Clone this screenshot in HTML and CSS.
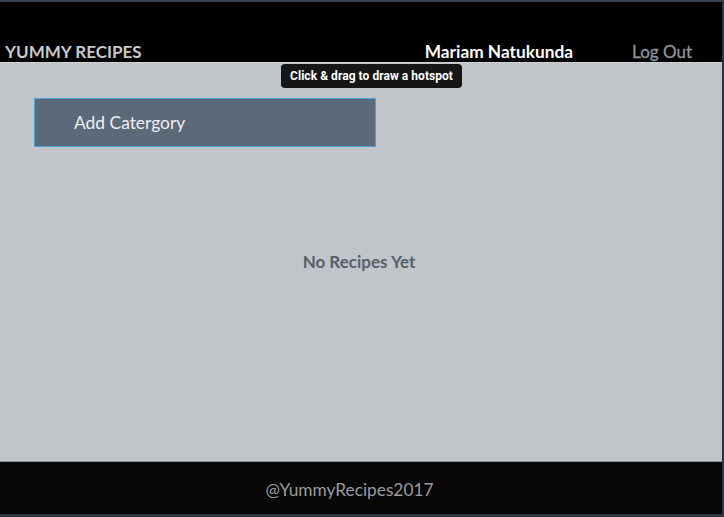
FILE: index.html
```html
<!DOCTYPE html>
<html>
<head>
<meta charset="utf-8">
<link rel="stylesheet" href="styles.css">
</head>
<body>
<div class="frame">
  <header class="topbar">
    <div class="brand">YUMMY RECIPES</div>
    <div class="nav">
      <span class="user">Mariam Natukunda</span>
      <span class="logout">Log Out</span>
    </div>
  </header>
  <main class="content">
    <div class="tooltip">Click &amp; drag to draw a hotspot</div>
    <button class="add-btn">Add Catergory</button>
    <div class="empty">No Recipes Yet</div>
  </main>
  <footer class="footer">@YummyRecipes2017</footer>
</div>
</body>
</html>
```
FILE: styles.css
```css
html, body {
  margin: 0;
  padding: 0;
  height: 100%;
}
body {
  font-family: Lato, "Liberation Sans", sans-serif;
  background: #2c3642;
}
.frame {
  box-sizing: border-box;
  height: 517px;
  width: 724px;
  border-top: 2px solid #34404c;
  border-right: 2px solid #2a3440;
  border-bottom: 3px solid #2c3844;
  display: flex;
  flex-direction: column;
  background: #000;
}
.topbar {
  height: 60px;
  background: #000;
  display: flex;
  align-items: flex-end;
  justify-content: space-between;
  padding: 0 30px 0 5px;
  box-sizing: border-box;
}
.brand {
  color: #c9c9c9;
  font-weight: 700;
  font-size: 17px;
  line-height: 20px;
}
.nav {
  display: flex;
  gap: 59px;
  line-height: 20px;
  align-items: flex-end;
}
.user {
  color: #fff;
  font-weight: 700;
  font-size: 17.3px;
}
.logout {
  color: #8e969e;
  font-size: 17px;
  -webkit-text-stroke: 0.3px #8e969e;
}
.content {
  position: relative;
  flex: 1;
  background: #c1c4c9;
  border-top: 1px solid #d0d3d6;
  border-bottom: 1px solid #8c9095;
  padding: 35px 0 0 34px;
}
.tooltip {
  position: absolute;
  left: 281px;
  top: 1px;
  height: 24px;
  padding: 0 9px 0 9px;
  background: #161616;
  color: #fff;
  border-radius: 4px;
  font-family: Roboto, "Noto Sans", sans-serif;
  font-weight: 700;
  font-size: 12px;
  line-height: 24px;
  letter-spacing: 0.05px;
}
.add-btn {
  display: block;
  width: 342px;
  height: 49px;
  box-sizing: border-box;
  background: #5b6978;
  border: 1px solid #48a3dc;
  color: #eef0f2;
  font-family: Lato, "Liberation Sans", sans-serif;
  font-size: 17.4px;
  text-align: left;
  padding: 0 0 0 39px;
  margin: 0;
}
.empty {
  margin-top: 104px;
  width: 650px;
  text-align: center;
  color: #56606c;
  font-weight: 700;
  font-size: 17px;
}
.footer {
  height: 52px;
  background: #070707;
  color: #9b9b9b;
  font-size: 17.3px;
  display: flex;
  align-items: center;
  justify-content: center;
  padding: 2px 23px 0 0;
  box-sizing: border-box;
}
```
